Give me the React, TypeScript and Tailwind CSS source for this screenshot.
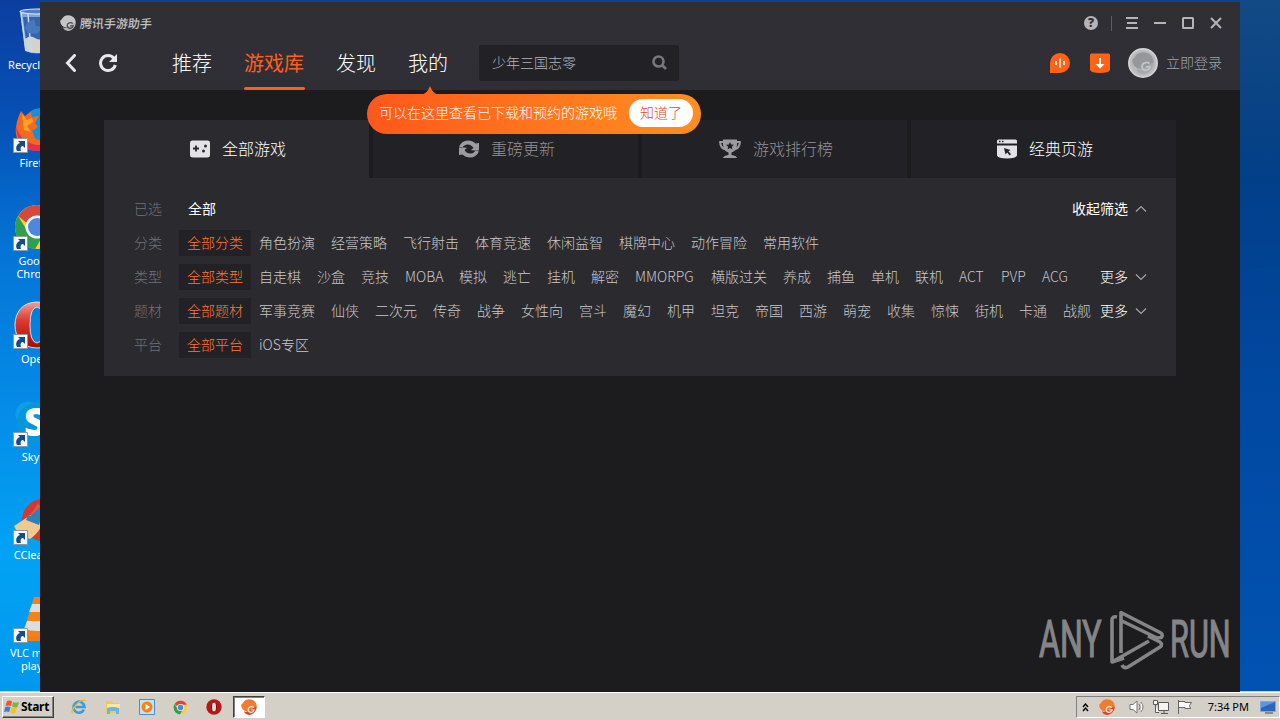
import type { ReactNode } from 'react';
import clsx from 'clsx';

interface Filter {
    label: string;
    active: string;
    items: string[];
    more?: boolean;
}

interface Shortcut {
    name: string;
    icon: ReactNode;
    link?: boolean;
}

const filters: Filter[] = [
    {
        label: '分类',
        active: '全部分类',
        items: ['角色扮演', '经营策略', '飞行射击', '体育竞速', '休闲益智', '棋牌中心', '动作冒险', '常用软件'],
    },
    {
        label: '类型',
        active: '全部类型',
        items: ['自走棋', '沙盒', '竞技', 'MOBA', '模拟', '逃亡', '挂机', '解密', 'MMORPG', '横版过关', '养成', '捕鱼', '单机', '联机', 'ACT', 'PVP', 'ACG'],
        more: true,
    },
    {
        label: '题材',
        active: '全部题材',
        items: ['军事竞赛', '仙侠', '二次元', '传奇', '战争', '女性向', '宫斗', '魔幻', '机甲', '坦克', '帝国', '西游', '萌宠', '收集', '惊悚', '街机', '卡通', '战舰'],
        more: true,
    },
    { label: '平台', active: '全部平台', items: ['iOS专区'] },
];

const itemWidths: Record<string, string> = {
    MOBA: 'w-[54px]',
    MMORPG: 'w-[76px]',
    ACT: 'w-[42px]',
    PVP: 'w-[41px]',
    ACG: 'w-[42px]',
};

function BirdLogo({ className, body, tail, line }: { className: string; body: string; tail: string; line: string }) {
    return (
        <svg viewBox="0 0 16 16" className={className}>
            <path d="M.4 5.200 1.800 4.300C2.800 1.800 5.300.2 8.100.2c4.300 0 7.600 3 7.700 7.200l-2.300 1.800L7 12.500l-3.500-.8C1.300 10.400-.2 8 .4 5.200Z" fill={body} />
            <path d="M2.800 12.300c1.800.7 3.500.7 5-.2l5.700-3.600 2.300-1C15.600 12.500 12 16 7.900 15.900c-2.200 0-4.200-1.300-5.100-3.600Z" fill={tail} />
            <path d="M12.800 8.400C10.500 6.700 7.300 8 7.200 10.700c0 2.700 3.900 3.700 5.500 1.200l.3-1.100h-2.800" fill="none" stroke={line} strokeWidth="1.300" />
        </svg>
    );
}

function Chevron({ up }: { up?: boolean }) {
    return (
        <svg viewBox="0 0 12 8" className="mt-[2px] ml-[7px] h-2 w-3" fill="none" stroke="#a5a5a8" strokeWidth="1.2">
            <path d={up ? 'M1 6.500 6 1.500l5 5' : 'M1 1.500l5 5 5-5'} />
        </svg>
    );
}

const ChromeIcon = ({ className }: { className: string }) => (
    <svg viewBox="0 0 48 48" className={className}>
        <circle cx="24" cy="24" r="22" fill="#f7cf3c" />
        <path d="M5 13A22 22 0 0 1 44 15H24a10 10 0 0 0-9 6Z" fill="#d9473b" />
        <path d="M5 13A22 22 0 0 0 22 46l10-16.500A10 10 0 0 1 15 29Z" fill="#2f9e50" />
        <circle cx="24" cy="24" r="11.500" fill="#f4f6fa" />
        <circle cx="24" cy="24" r="9" fill="#4f86e0" />
    </svg>
);

const shortcuts: Shortcut[] = [
    {
        name: 'Recycle Bin',
        icon: (
            <svg viewBox="0 0 48 48" className="size-12">
                <path d="M7 4h34l-5 40q-12 5-24 0Z" fill="#7fa6d8" />
                <path d="M10 10h28l-3 24q-11 6-22 0Z" fill="#3563ad" />
                <path d="M11 33q6-6 11-2t14-3l-2 16q-10 4-21 0Z" fill="#d3d3cb" />
                <path d="M8 6 13 44M15 7l3 37" stroke="#c6d9ef" strokeWidth="1.500" />
                <ellipse cx="24" cy="4.500" rx="17" ry="2.500" fill="#547fb9" stroke="#dce9f5" strokeWidth="1.200" />
                <path d="m14 16 7-4 2 7 7 1-6 7-9-1-3-5Z" fill="#4678bd" />
            </svg>
        ),
    },
    {
        name: 'Firefox',
        link: true,
        icon: (
            <svg viewBox="0 0 48 48" className="size-12">
                <circle cx="28" cy="21" r="18" fill="#168fd8" />
                <path d="M8 6l4 5 6-4 1 5 7-1-4 7 3 4-6 4 3 7q8 6 20-2-4 15-18 15C11 46 1 36 3 22 4 15 6 10 8 6Z" fill="#f26a22" />
                <path d="M3 21q5 17 21 19l15-1Q32 47 21 46 4 42 3 21Z" fill="#e32f50" />
                <path d="M9 9l5 6 5-2 1 4-6 4 4 6-7-2Z" fill="#ffa024" />
            </svg>
        ),
    },
    { name: 'Google Chrome', link: true, icon: <ChromeIcon className="size-12" /> },
    {
        name: 'Opera',
        link: true,
        icon: (
            <svg viewBox="0 0 48 48" className="size-12">
                <defs>
                    <linearGradient id="opera" x2="0" y2="1">
                        <stop stopColor="#eaa09a" />
                        <stop offset=".4" stopColor="#dd3a30" />
                        <stop offset="1" stopColor="#a60b08" />
                    </linearGradient>
                </defs>
                <path fillRule="evenodd" d="M24 1C10 1 2 11 2 24s8 23 22 23 22-10 22-23S38 1 24 1Zm0 5q-7 1-7 18t7 18q7-1 7-18T24 6Z" fill="url(#opera)" stroke="#d6dce4" />
            </svg>
        ),
    },
    {
        name: 'Skype',
        link: true,
        icon: (
            <svg viewBox="0 0 48 48" className="size-12">
                <circle cx="15" cy="15" r="12.500" fill="#0b9fe6" />
                <circle cx="24" cy="24" r="20" fill="#0795db" />
                <text x="11" y="37" fontSize="38" fontWeight="800" fill="#fff" fontFamily="Open Sans, sans-serif">S</text>
            </svg>
        ),
    },
    {
        name: 'CCleaner',
        link: true,
        icon: (
            <svg viewBox="0 0 48 48" className="size-12">
                <circle cx="30" cy="23" r="21" fill="#d13a30" />
                <path d="M25 6 16 20l14 5 4-8Z" fill="#df5447" />
                <path d="M1 29q11-7 16-11l12 9q-3 9-12 15Q4 38 1 29Z" fill="#ecca91" />
                <path d="m27 10-9 9-3-1-2 5 13 5 2-6 8-10Z" fill="#2f80b9" />
            </svg>
        ),
    },
    {
        name: 'VLC media player',
        link: true,
        icon: (
            <svg viewBox="0 0 48 48" className="size-12">
                <path d="m6 33 36 0 4 13H2Z" fill="#ee7e17" />
                <path d="M21 2h6l11 37q-14 5-28 0Z" fill="#f2821a" />
                <path d="m19 9 10 0 3 8H16ZM14 26h20l3 8q-13 4-26 0Z" fill="#ddd" />
            </svg>
        ),
    },
];

function ShortcutArrow() {
    return (
        <svg viewBox="0 0 15 15" className="absolute bottom-0 left-0 size-[15px]">
            <path d="M.5.500h14v14H.500Z" fill="#f5f6f8" stroke="#8f979f" />
            <path d="M4 13C2 9 4 6 7 5L5 3h7v7l-2-2c-2 0-3 2-2 5Z" fill="#154a8b" />
        </svg>
    );
}

function Desktop() {
    return (
        <div className="w-10 shrink-0 overflow-hidden bg-[linear-gradient(180deg,#0c3e9f_0%,#0651b6_18%,#0474d6_36%,#048de8_60%,#02a2f4_80%,#0197ee_100%)] pt-[7px]">
            {shortcuts.map((shortcut) => (
                <div key={shortcut.name} className="flex h-[98px] w-[74px] flex-col items-center">
                    <div className="relative size-12 shrink-0">
                        {shortcut.icon}
                        {shortcut.link && <ShortcutArrow />}
                    </div>
                    <p className="mt-[3px] w-[64px] text-center font-['Noto_Sans'] text-[11px] leading-[13px] font-normal text-white">{shortcut.name}</p>
                </div>
            ))}
        </div>
    );
}

function Header() {
    return (
        <header className="flex h-[88px] flex-col bg-[linear-gradient(180deg,#2f2e31_0%,#302f36_35%,#2f2e35_100%)]">
            <div className="flex h-[42px] items-center pr-[17px] pl-5">
                <BirdLogo className="size-4" body="#c5c5c7" tail="#b2b2b5" line="#4b4b50" />
                <span className="ml-1 -skew-x-6 pb-px text-[12px] font-medium text-[#c4c4c7]">腾讯手游助手</span>
                <div className="ml-auto flex items-center text-[#b5b5b8]">
                    <span className="flex size-[14px] items-center justify-center rounded-full bg-[#b5b5b8] font-['Open_Sans'] text-[12px] leading-none font-extrabold text-[#2f2e34]">?</span>
                    <span className="ml-[13px] h-[15px] w-px bg-[#5c5c61]" />
                    <svg viewBox="0 0 12 12" className="ml-[14px] size-3" stroke="currentColor" strokeWidth="2">
                        <path d="M0 1h12M1 6h10M0 11h12" />
                    </svg>
                    <svg viewBox="0 0 12 12" className="ml-4 size-3" stroke="currentColor" strokeWidth="2">
                        <path d="M0 6h12" />
                    </svg>
                    <svg viewBox="0 0 12 12" className="ml-4 size-3" fill="none" stroke="currentColor" strokeWidth="2">
                        <rect x="1" y="1" width="10" height="10" rx=".5" />
                    </svg>
                    <svg viewBox="0 0 12 12" className="mr-[1px] ml-4 size-3" stroke="currentColor" strokeWidth="2">
                        <path d="m1 1 10 10M11 1 1 11" />
                    </svg>
                </div>
            </div>
            <div className="flex h-[46px] items-center pr-[18px] pb-[9px] pl-6">
                <svg viewBox="0 0 14 18" className="h-[18px] w-[14px]" fill="none" stroke="#e8e8ea" strokeWidth="3">
                    <path d="M10.500 1.500 3.500 9l7 7.500" strokeLinecap="round" />
                </svg>
                <svg viewBox="0 0 20 20" className="ml-5 size-5" fill="none">
                    <path d="M16 5.500A7.500 7.500 0 1 0 17.300 12" stroke="#e8e8ea" strokeWidth="3" />
                    <path d="M19 1v8h-8Z" fill="#e8e8ea" />
                </svg>
                <nav className="ml-[54px] flex gap-8 text-[20px] leading-[30px] whitespace-nowrap text-white">
                    <a>推荐</a>
                    <a className="relative font-normal text-[#ff5e1f] after:absolute after:top-[39px] after:left-0 after:h-[3px] after:w-[61px] after:rounded-xs after:bg-[#ff5e1f]">游戏库</a>
                    <a>发现</a>
                    <a>我的</a>
                </nav>
                <div className="ml-[31px] flex h-9 w-[200px] items-center justify-between rounded-xs bg-[#212126] pr-3 pl-[13px]">
                    <span className="text-[14px] text-[#b4b4b8]">少年三国志零</span>
                    <svg viewBox="0 0 15 15" className="size-[15px]" fill="none" stroke="#76767b" strokeWidth="2.600">
                        <circle cx="6.500" cy="6.500" r="5" />
                        <path d="m10 10 4 4" />
                    </svg>
                </div>
                <div className="ml-auto flex items-center">
                    <svg viewBox="0 0 20 20" className="size-5">
                        <path d="M0 20V10a10 10 0 1 1 10 10Z" fill="#ff6414" />
                        <path d="M6 8v4M10 5.500v9M14 8v4" stroke="#fff" strokeWidth="1.600" />
                    </svg>
                    <svg viewBox="0 0 20 20" className="ml-5 size-5">
                        <path d="M0 2q0-1.500 1.500-1.500h17Q20 .5 20 2v15q-1 3-10 3T0 17Z" fill="#ff6414" />
                        <path d="M9 5h2v6h3.500L10 15.500 5.500 11H9Z" fill="#fff" />
                    </svg>
                    <span className="ml-[18px] flex size-[30px] items-center justify-center rounded-full border-2 border-[#d0d0d2] bg-[#bababc]">
                        <BirdLogo className="size-[22px]" body="#95979a" tail="#a6a8aa" line="#c3c4c5" />
                    </span>
                    <span className="ml-2 text-[14px] text-[#a3a3a8]">立即登录</span>
                </div>
            </div>
        </header>
    );
}

function Tip() {
    return (
        <div className="absolute top-[92px] left-[327px] flex h-10 w-[334px] items-center rounded-full bg-linear-to-r from-[#ff571c] to-[#ff8e20] pr-2 pb-[2px] pl-3 whitespace-nowrap">
            <svg viewBox="0 0 18 9" className="absolute -top-2 left-[54px] h-[9px] w-[18px]">
                <path d="M0 9Q6 8 9 0q3 8 9 9Z" fill="#ff611d" />
            </svg>
            <span className="pb-px text-[14px] text-white">可以在这里查看已下载和预约的游戏哦</span>
            <span className="ml-auto flex h-7 w-16 items-center justify-center rounded-full bg-white pb-px text-[14px] text-[#e04a1c]">知道了</span>
        </div>
    );
}

const tabs = [
    {
        name: '全部游戏',
        className: 'bg-[#2b2a2f] text-white',
        icon: (
            <svg viewBox="0 0 20 20" className="mt-[2px] size-5">
                <path d="M2.500 1.500h15Q20 1.500 20 4v12q0 2.500-3 2.500H3Q0 18.500 0 16V4q0-2.500 2.500-2.500Z" fill="#e3e3e5" />
                <path d="M3 9.500h6M6 6.500v6" stroke="#2b2a2f" strokeWidth="1.800" />
                <circle cx="15.500" cy="7" r="1.500" fill="#2b2a2f" />
                <circle cx="13.500" cy="12" r="1.500" fill="#2b2a2f" />
            </svg>
        ),
    },
    {
        name: '重磅更新',
        className: 'bg-[#222125] text-[#929297]',
        icon: (
            <svg viewBox="0 0 20 20" className="mt-[2px] size-5" fill="#9c9ca0">
                <path d="M0 7.500Q3 1.500 9 1.500q4.500 0 7.500 3L20 4v7.500h-8.500l3-2.500Q12 5 8 5.500 5 6 3.500 8.500Z" />
                <path d="M20 12.500q-3 6-9 6-4.500 0-7.500-3L0 16V8.500h8.500l-3 2.500Q8 15 12 14.500q3-.5 4.500-3Z" />
                <path d="m4.500 7.500 5.500 1M15.500 12.500l-5.500-1" stroke="#222125" strokeWidth="1" />
            </svg>
        ),
    },
    {
        name: '游戏排行榜',
        className: 'bg-[#222125] text-[#929297]',
        icon: (
            <svg viewBox="0 0 22 20" className="mt-[2px] h-5 w-[22px]">
                <path d="M5 3H1.200Q1 9 7 10.500M17 3h3.800Q21 9 15 10.500" fill="none" stroke="#9c9ca0" strokeWidth="2" />
                <path d="M4 .5h14V6q-.5 6-5.500 7.500V16q5 .5 5.500 3H4q.5-2.500 5.500-3v-2.500Q4.500 12 4 6Z" fill="#9c9ca0" />
                <path d="m11 3 1.200 2.500 2.700.3-2 1.900.5 2.700L11 9.100l-2.400 1.300.5-2.700-2-1.900 2.700-.3Z" fill="#222125" />
            </svg>
        ),
    },
    {
        name: '经典页游',
        className: 'bg-[#222125] text-white',
        icon: (
            <svg viewBox="0 0 20 20" className="mt-[2px] size-5">
                <path d="M0 4.500V2Q0 .5 1.500.5h17Q20 .5 20 2v2.500ZM0 6.500h20v10q-1 3-10 3t-10-3Z" fill="#e3e3e5" />
                <path d="M2 2.500h1.500M5 2.500h1.500" stroke="#222125" strokeWidth="1.300" />
                <path d="m7 9 6.500 2-2 1.300 2.500 3-1.300 1.200-2.500-3L8.500 15.500Z" fill="#222125" />
            </svg>
        ),
    },
];

function Library() {
    return (
        <main className="px-16 pt-[30px]">
            <div className="grid h-[58px] grid-cols-4 gap-1">
                {tabs.map((tab) => (
                    <div key={tab.name} className={clsx('flex items-center justify-center gap-3 pb-[2px] pl-[3px] text-[16px]', tab.className)}>
                        {tab.icon}
                        <span>{tab.name}</span>
                    </div>
                ))}
            </div>
            <section className="h-[198px] bg-[#2b2a2f] pt-[13px] pr-[29px] pl-[30px] text-[14px] whitespace-nowrap">
                <div className="flex h-[34px] items-center text-white">
                    <span className="w-[54px] text-[#727277]">已选</span>
                    <span className="font-normal">全部</span>
                    <span className="ml-auto font-normal">收起筛选</span>
                    <Chevron up />
                </div>
                {filters.map((filter) => (
                    <div key={filter.label} className="flex h-[34px] items-center">
                        <span className="w-[45px] shrink-0 text-[#727277]">{filter.label}</span>
                        <span className="mt-[2px] flex h-[26px] w-[72px] shrink-0 items-center justify-center bg-[#222125] pb-[2px] text-[#ff7836]">{filter.active}</span>
                        {filter.items.map((item) => (
                            <span key={item} className={clsx('shrink-0 px-2 text-[#c8c8cb]', itemWidths[item])}>{item}</span>
                        ))}
                        {filter.more && (
                            <span className="ml-auto flex items-center text-white">
                                更多
                                <Chevron />
                            </span>
                        )}
                    </div>
                ))}
            </section>
        </main>
    );
}

function Watermark() {
    return (
        <svg viewBox="0 0 194 64" className="absolute right-[8px] bottom-[20px] h-16 w-[194px]" fill="#858587">
            <text transform="translate(1 49) scale(.62 1)" fontSize="51" textLength="101" lengthAdjust="spacingAndGlyphs" fontFamily="Roboto, sans-serif" fontWeight="400" stroke="#858587" strokeWidth="1.200">ANY</text>
            <text transform="translate(132 49) scale(.62 1)" fontSize="51" textLength="98" lengthAdjust="spacingAndGlyphs" fontFamily="Roboto, sans-serif" fontWeight="400" stroke="#858587" strokeWidth="1.200">RUN</text>
            <g fill="none" stroke="#858587" strokeWidth="3.600" strokeLinejoin="round">
                <path d="M83 45V4.500L123 25q2.500 2.500 0 4.500L119 30 84 13" />
                <path d="M79 9q-5-1-5 3v42l37-21M74 54l12-4" />
                <path d="M84 57q2 4 6 2l32-20q3-2 0-5l-12-6" />
            </g>
        </svg>
    );
}

function Taskbar() {
    return (
        <footer className="flex h-7 items-center border-t border-white bg-[#d4d0c8] pt-px shadow-[0_-1px_0_#d4d0c8]">
            <button className="ml-[2px] flex h-[22px] w-[52px] items-center border border-t-white border-r-[#404040] border-b-[#404040] border-l-white pl-px font-['Noto_Sans'] text-[12px] font-bold tracking-[-0.3px] text-black shadow-[inset_-1px_-1px_0_#808080]">
                <svg viewBox="0 0 16 16" className="mr-px size-4 shrink-0">
                    <path d="M3 2q3-1 5 .5L7 7Q5 6 1.500 7Z" fill="#e8592b" />
                    <path d="M9 3q3 1.500 6 0l-1.500 5Q11 9 8 7.500Z" fill="#75b843" />
                    <path d="M1.200 8q3-1 5.300 0L5.200 13Q3 12 0 13Z" fill="#3b7fd4" />
                    <path d="M7.500 8.500q3 1 5.500.3L11.500 14q-3 1-5.300-.5Z" fill="#f6c12d" />
                </svg>
                Start
            </button>
            <div className="ml-[17px] flex items-center">
                <svg viewBox="0 0 16 16" className="size-4" fill="none">
                    <path d="M13 10.500A5.500 5.500 0 1 1 13.500 8H4.500" stroke="#3d9cd8" strokeWidth="2.600" />
                    <path d="M2 14Q-1 13 5 6t10-4" stroke="#e6b93a" strokeWidth="1.300" />
                </svg>
                <svg viewBox="0 0 16 16" className="ml-[18px] size-4">
                    <path d="M1 2h6l1 2h6v10H1Z" fill="#e9cb63" />
                    <path d="M2 5h13v4H2Z" fill="#f6e7a2" />
                    <path d="M2 9q6-2 12 0v6h-3v-3H5v3H2Z" fill="#6fb3e0" />
                </svg>
                <svg viewBox="0 0 16 16" className="ml-[18px] size-4">
                    <path d="M.5.500h15v15H.500Z" fill="#c8dff2" stroke="#4b8fd0" />
                    <circle cx="8" cy="8" r="5.500" fill="#f28518" />
                    <path d="m6.500 5 4.500 3-4.500 3Z" fill="#fff" />
                </svg>
                <ChromeIcon className="ml-[18px] size-[15px]" />
                <svg viewBox="0 0 16 16" className="ml-[18px] size-4">
                    <circle cx="8" cy="8" r="7.700" fill="#b61a17" />
                    <ellipse cx="8" cy="8" rx="2.500" ry="5" fill="#e9dcdc" stroke="#780c0b" />
                </svg>
                <span className="ml-[11px] flex h-[22px] w-8 items-center justify-center border border-t-[#404040] border-r-white border-b-white border-l-[#404040] bg-white shadow-[inset_1px_1px_0_#808080]">
                    <BirdLogo className="size-4" body="#f47a2c" tail="#d8452f" line="#dfe3ea" />
                </span>
            </div>
            <div className="ml-auto flex h-[22px] w-[204px] items-center border border-t-[#808080] border-r-white border-b-white border-l-[#808080] pr-[3px] pl-[5px] font-['Noto_Sans'] text-[11px] font-normal text-black">
                <svg viewBox="0 0 7 9" className="h-[9px] w-[7px]" fill="none" stroke="#000" strokeWidth="1.400">
                    <path d="m1 4 2.500-3L6 4M1 8l2.500-3L6 8" />
                </svg>
                <BirdLogo className="ml-[10px] size-4" body="#f47a2c" tail="#e2402b" line="#f3e9e6" />
                <svg viewBox="0 0 16 16" className="ml-[14px] size-4" fill="#fff" stroke="#77777a">
                    <path d="M1 5.500h3L8 2v12l-4-3.500H1ZM10 5q2 3 0 6M12 3q4 5 0 10" />
                </svg>
                <svg viewBox="0 0 16 16" className="ml-[8px] size-4" fill="#f5f5f2" stroke="#5a5a5a">
                    <path d="M5.500 3.500h10v8h-10ZM8 14.500h7M11 11.500v3M.5 1.500h4v4h-4ZM2.500 5.500v8H6" />
                </svg>
                <svg viewBox="0 0 16 16" className="ml-[8px] size-4" fill="#fafafa" stroke="#666">
                    <path d="M1.500 15V1M2 2.500h6v1h6.500l-2 3 1 3H8v-1H2" />
                </svg>
                <span className="ml-auto">7:34 PM</span>
                <svg viewBox="0 0 16 14" className="ml-[11px] h-[14px] w-4">
                    <path d="M.5 1.500h15v10H.500Z" fill="#2b65bd" stroke="#7fa8dc" />
                    <path d="M1 2h14L1 8Z" fill="#5b96df" />
                    <path d="M5 13h8" stroke="#444" />
                </svg>
            </div>
        </footer>
    );
}

export default function App() {
    return (
        <div className="flex h-[720px] w-[1280px] flex-col overflow-hidden bg-[#0d428f] font-['Noto_Sans_CJK_SC','Noto_Sans',sans-serif] font-light">
            <div className="flex h-[692px] shrink-0">
                <Desktop />
                <div className="relative mt-[2px] w-[1200px] shrink-0 bg-[#1c1b1e]">
                    <Header />
                    <Library />
                    <Tip />
                    <Watermark />
                </div>
                <div className="w-10 shrink-0 bg-[linear-gradient(180deg,#124a85_0%,#0a4384_15%,#013f89_26%,#0148a0_55%,#0153b2_100%)]" />
            </div>
            <Taskbar />
        </div>
    );
}
